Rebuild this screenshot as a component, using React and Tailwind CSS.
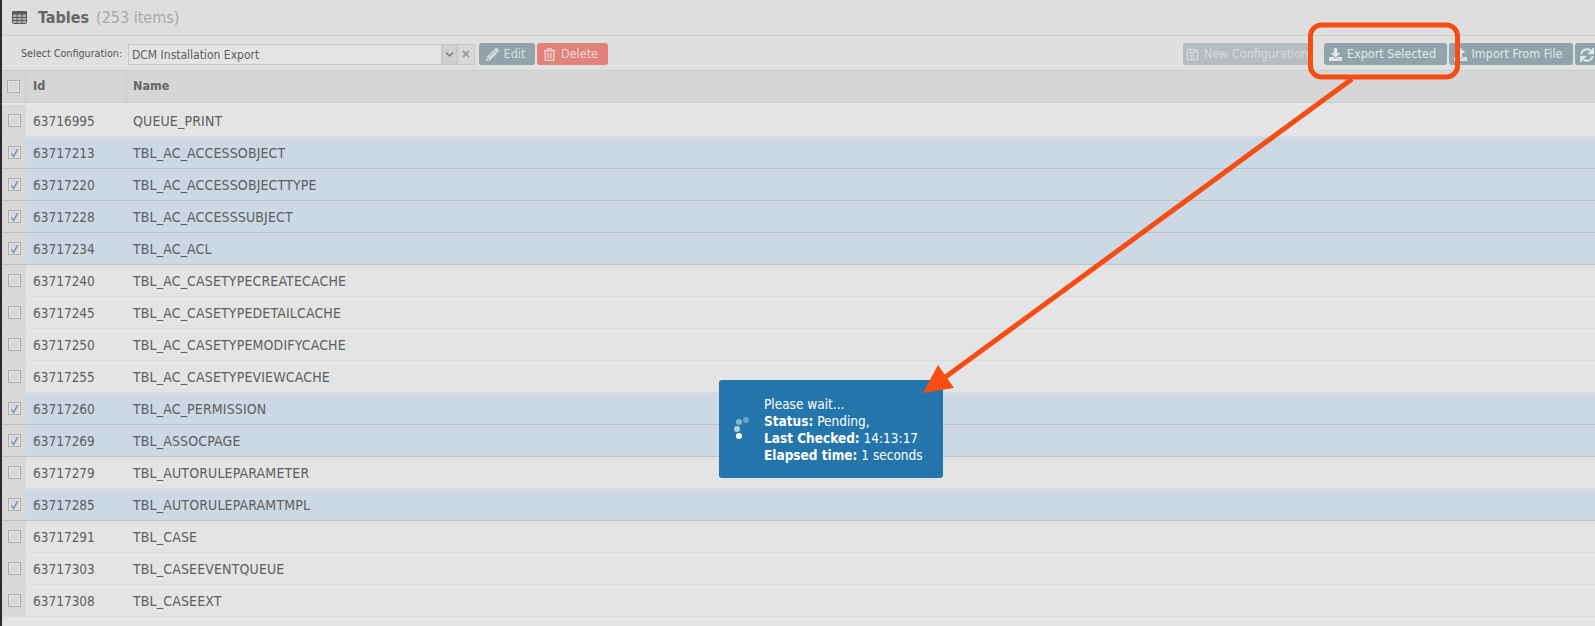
import { FaDownload, FaUpload, FaRegSave, FaPencilAlt, FaRegTrashAlt, FaSync, FaChevronDown, FaTimes } from 'react-icons/fa'

const rows = [
  ['63716995', 'QUEUE_PRINT', false],
  ['63717213', 'TBL_AC_ACCESSOBJECT', true],
  ['63717220', 'TBL_AC_ACCESSOBJECTTYPE', true],
  ['63717228', 'TBL_AC_ACCESSSUBJECT', true],
  ['63717234', 'TBL_AC_ACL', true],
  ['63717240', 'TBL_AC_CASETYPECREATECACHE', false],
  ['63717245', 'TBL_AC_CASETYPEDETAILCACHE', false],
  ['63717250', 'TBL_AC_CASETYPEMODIFYCACHE', false],
  ['63717255', 'TBL_AC_CASETYPEVIEWCACHE', false],
  ['63717260', 'TBL_AC_PERMISSION', true],
  ['63717269', 'TBL_ASSOCPAGE', true],
  ['63717279', 'TBL_AUTORULEPARAMETER', false],
  ['63717285', 'TBL_AUTORULEPARAMTMPL', true],
  ['63717291', 'TBL_CASE', false],
  ['63717303', 'TBL_CASEEVENTQUEUE', false],
  ['63717308', 'TBL_CASEEXT', false],
]

function Box({ checked }) {
  return (
    <span className="flex h-[13px] w-[13px] shrink-0 items-center justify-center border border-[#adadad] bg-[#d8d8d8] shadow-[inset_0_0_0_1px_#e4e4e4]">
      {checked && (
        <svg width="9" height="10" viewBox="0 0 9 10" fill="none" stroke="#7488c0" strokeWidth="1.4">
          <path d="M1.5 5.5 L3.6 8.5 L7.8 0.8" />
        </svg>
      )}
    </span>
  )
}

function GridIcon() {
  return (
    <svg width="15" height="13" viewBox="0 0 15 13" className="shrink-0">
      <rect x="0.5" y="0.5" width="14" height="12" rx="1" fill="#b0b0b0" stroke="#5c5c5c" />
      <rect x="0" y="0" width="15" height="3.5" rx="1" fill="#5c5c5c" />
      <path d="M5 3 V12.5 M10 3 V12.5 M0.5 6.5 H14.5 M0.5 9.5 H14.5" stroke="#5c5c5c" />
    </svg>
  )
}

function Btn({ icon: Icon, children, className = '', iconSize = 12 }) {
  return (
    <button className={`flex h-[22px] shrink-0 items-center gap-[5px] rounded-[3px] pt-[1px] text-[12.5px] ${className}`}>
      <Icon size={iconSize} />
      {children}
    </button>
  )
}

export default function App() {
  return (
    <div className="relative h-[626px] w-[1595px] overflow-hidden bg-[#e4e4e4] font-['DejaVu_Sans_Condensed','DejaVu_Sans',sans-serif] text-[13.5px] text-[#5e5e5e]">
      <div className="absolute bottom-0 left-0 top-0 w-[2px] bg-[#2c2c2c]" />
      <div className="ml-[2px]">
        <div className="flex h-[36px] items-center border-b border-[#d0d0d0] bg-[#dedede] pl-[10px]">
          <GridIcon />
          <div className="ml-[11px] text-[16px] font-bold text-[#666]">
            Tables <span className="ml-[2px] font-normal text-[#a8a8a8]">(253 items)</span>
          </div>
        </div>

        <div className="flex h-[34px] items-center bg-[#e0e0e0] pl-[19px] pt-[2px]">
          <span className="w-[107px] pt-[1px] text-[10.7px] text-[#555]">Select Configuration:</span>
          <div className="flex h-[21px] w-[314px] items-center border border-[#c8c8c8] bg-[#e4e4e4] pl-[3px] pt-[1px] text-[12px]">
            DCM Installation Export
          </div>
          <div className="flex h-[21px] w-[15px] items-center justify-center border border-[#c8c8c8] bg-[#cfcfcf]">
            <FaChevronDown size={9} className="text-[#777]" />
          </div>
          <div className="flex h-[21px] w-[18px] items-center justify-center border border-[#c8c8c8] bg-[#d8d8d8]">
            <FaTimes size={10} className="text-[#999]" />
          </div>
          <Btn icon={FaPencilAlt} iconSize={13} className="ml-[4px] w-[56px] justify-center bg-[#93a3ab] pr-[3px] text-[#d8dfe2]">Edit</Btn>
          <Btn icon={FaRegTrashAlt} iconSize={13} className="ml-[2px] w-[71px] justify-center bg-[#e08279] pr-[4px] text-[#f0d8d4]">Delete</Btn>
          <div className="ml-auto flex w-[412px] items-center overflow-hidden pl-0">
            <Btn icon={FaRegSave} iconSize={13} className="w-[126px] justify-center bg-[#b5bdc1] pl-[2px] text-[#d6dadc]">New Configuration</Btn>
            <span className="ml-[13px] mr-[2px] h-[14px] w-px bg-[#bbb]" />
            <Btn icon={FaDownload} iconSize={13} className="w-[123px] justify-center bg-[#93a3ab] pr-[6px] text-[#e4e8ea]">Export Selected</Btn>
            <Btn icon={FaUpload} iconSize={13} className="ml-[2px] w-[124px] justify-center bg-[#93a3ab] pr-[6px] text-[#e4e8ea]">Import From File</Btn>
            <Btn icon={FaSync} iconSize={14} className="ml-[2px] w-[24px] justify-center bg-[#93a3ab] text-[#e4e8ea]" />
          </div>
        </div>

        <div className="flex h-[33px] border-y border-[#c8ccd0] bg-[#d6d6d6] text-[12.5px] font-bold text-[#666]">
          <div className="flex w-[24px] items-center justify-center border-r border-[#cbcbcb]"><Box /></div>
          <div className="w-[101px] border-r border-[#cbcbcb] pl-[7px] leading-[29px]">Id</div>
          <div className="pl-[6px] leading-[29px]">Name</div>
        </div>
        <div className="h-[2px] bg-[#e4e8ec]" />

        {rows.map(([id, name, checked]) => (
          <div key={id} className={`flex h-[32px] border-b ${checked ? 'border-[#bfc2c6] bg-[#ccd8e4]' : 'border-[#dadcde] bg-[#e4e4e4]'}`}>
            <div className="flex w-[24px] items-center justify-center bg-[#d8d8d8]"><Box checked={checked} /></div>
            <div className="w-[101px] pl-[7px] leading-[33px]">{id}</div>
            <div className="pl-[6px] text-[14px] leading-[33px] tracking-[0.14px]">{name}</div>
          </div>
        ))}
      </div>

      <div className="absolute left-[719px] top-[380px] flex h-[98px] w-[224px] items-center rounded-[3px] bg-[#2575ad] pl-[15px] text-[13.5px] leading-[17px] text-white">
        <div className="relative mr-[16px] h-[28px] w-[14px]">
          <span className="absolute left-[9px] top-[2px] h-[6px] w-[6px] rounded-full bg-[#6aa3cb]" />
          <span className="absolute left-[2px] top-[4px] h-[6px] w-[6px] rounded-full bg-[#8ab8d6]" />
          <span className="absolute left-0 top-[11px] h-[6px] w-[6px] rounded-full bg-[#b4d1e4]" />
          <span className="absolute left-[2px] top-[18px] h-[6px] w-[6px] rounded-full bg-white" />
        </div>
        <div className="pt-[2px]">
          <div>Please wait...</div>
          <div><b>Status:</b> Pending,</div>
          <div><b>Last Checked:</b> 14:13:17</div>
          <div><b>Elapsed time:</b> 1 seconds</div>
        </div>
      </div>

      <svg className="pointer-events-none absolute left-0 top-0" width="1595" height="626">
        <rect x="1310.5" y="25" width="147" height="52" rx="11" fill="none" stroke="#f54d14" strokeWidth="5" />
        <line x1="1352" y1="79" x2="940" y2="381" stroke="#f54d14" strokeWidth="5" />
        <polygon points="923,393 938,365 954,388" fill="#f54d14" />
      </svg>
    </div>
  )
}
